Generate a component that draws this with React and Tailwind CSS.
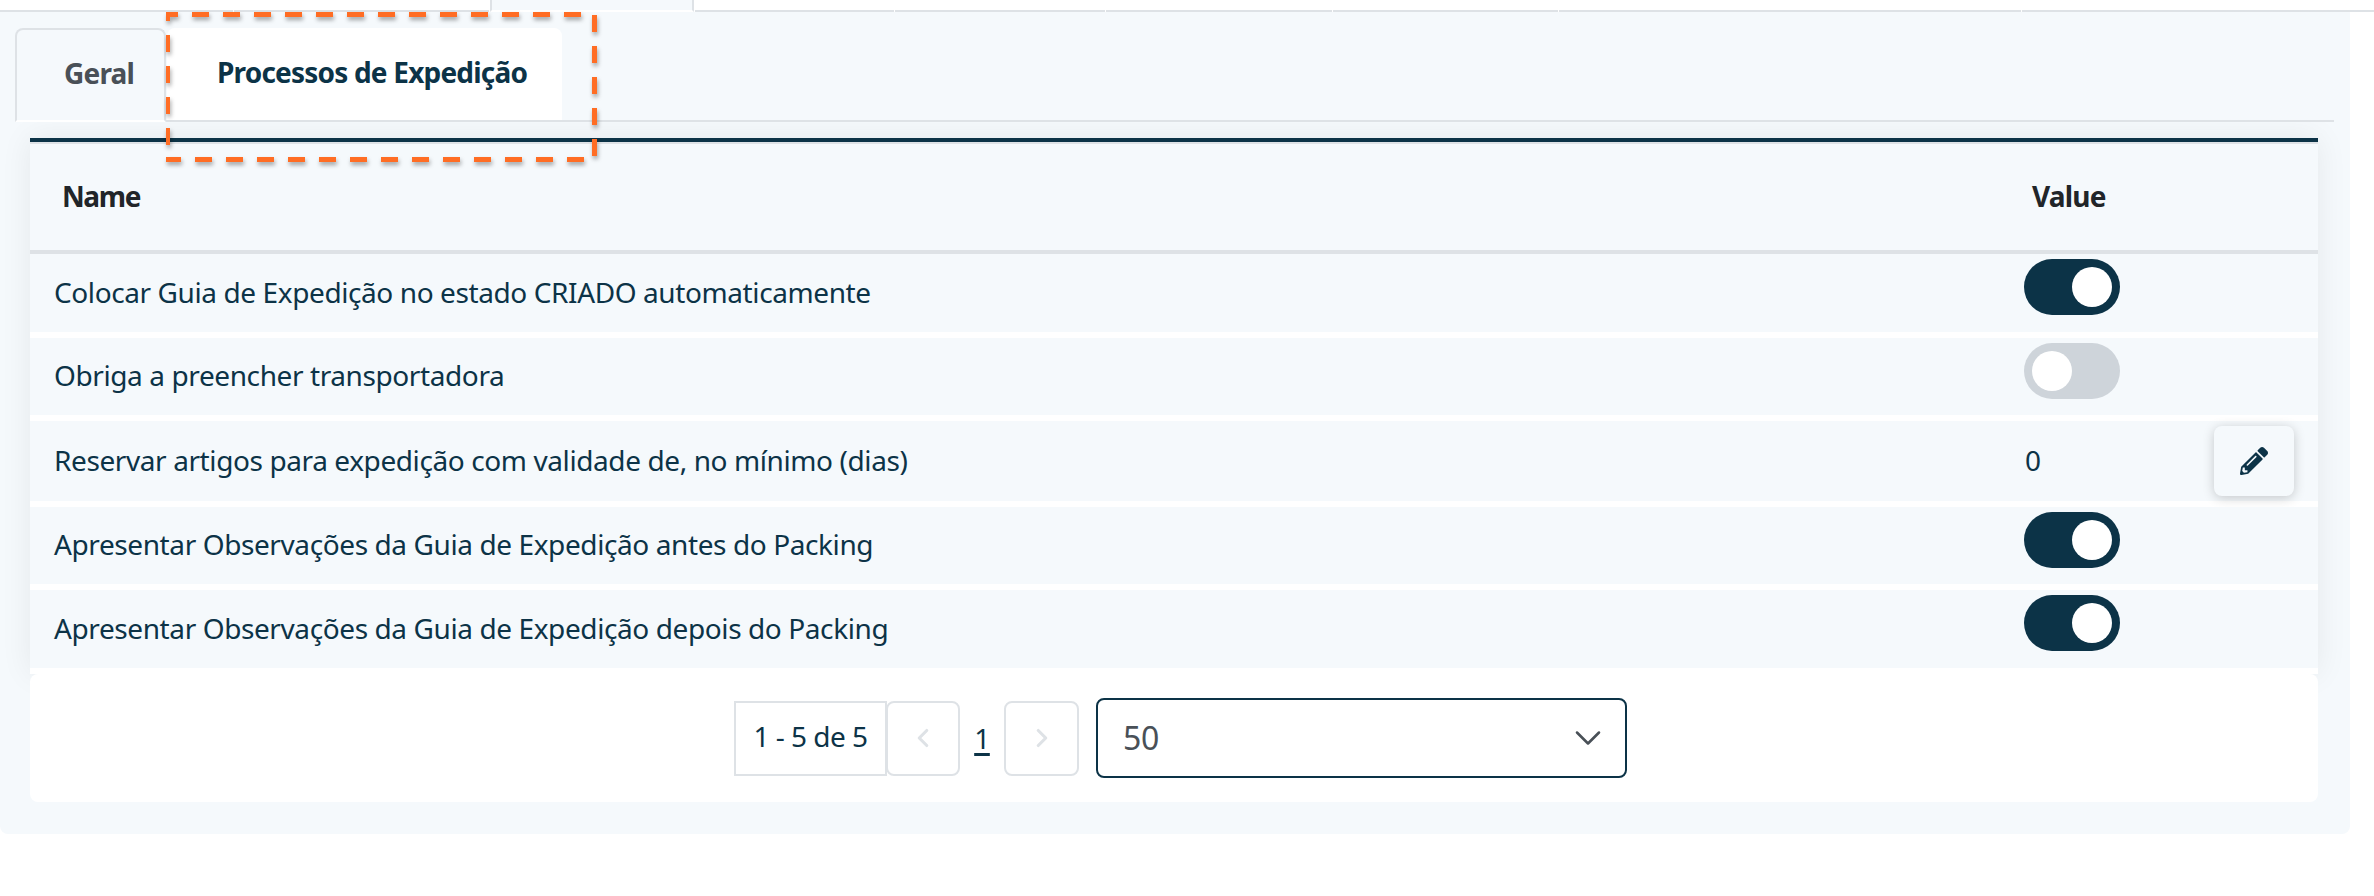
import { ChevronDown, ChevronLeft, ChevronRight } from 'lucide-react';
import { FaPencilAlt } from 'react-icons/fa';

const topTabs = [233, 255, 204, 199, 210, 226, 225, 462, 352];

const rows = [
  { name: 'Colocar Guia de Expedição no estado CRIADO automaticamente', on: true, height: 'h-[78px]' },
  { name: 'Obriga a preencher transportadora', on: false, height: 'h-[77px]' },
  { name: 'Reservar artigos para expedição com validade de, no mínimo (dias)', value: '0', height: 'h-[80px]' },
  { name: 'Apresentar Observações da Guia de Expedição antes do Packing', on: true, height: 'h-[77px]' },
  { name: 'Apresentar Observações da Guia de Expedição depois do Packing', on: true, height: 'h-[78px]' },
];

function Toggle({ on }) {
  return (
    <div className={`mt-[5px] flex h-[56px] w-[96px] items-center rounded-full px-2 ${on ? 'justify-end bg-[#0c3347]' : 'justify-start bg-[#ced4da]'}`}>
      <div className="h-10 w-10 rounded-full bg-white" />
    </div>
  );
}

function Highlight() {
  return (
    <svg className="pointer-events-none absolute left-0 top-0 z-20 drop-shadow-[1px_3px_2px_rgba(0,0,0,0.35)]" width="620" height="180" fill="none" stroke="#ff6d24">
      <line x1="166" y1="14.5" x2="581" y2="14.5" strokeWidth="5" strokeDasharray="17 14" strokeDashoffset="5" />
      <line x1="166" y1="159.5" x2="584" y2="159.5" strokeWidth="5" strokeDasharray="17 14" strokeDashoffset="2" />
      <line x1="168" y1="12" x2="168" y2="145" strokeWidth="4" strokeDasharray="17 14" strokeDashoffset="8" />
      <line x1="594.5" y1="15" x2="594.5" y2="156" strokeWidth="5" strokeDasharray="17 14" />
    </svg>
  );
}

export default function App() {
  return (
    <div className="relative h-[896px] w-[2374px] overflow-hidden bg-white font-['Noto_Sans',sans-serif] text-[28px] tracking-[-0.4px] text-[#0c3347]">
      <div className="flex h-3 gap-px">
        {topTabs.map((width, i) =>
          i === 2 ? (
            <div key={i} style={{ width }} className="border-x-2 border-b-2 border-x-[#dee2e6] border-b-white bg-[#f5f9fc]" />
          ) : (
            <div key={i} style={{ width }} className="border-b-2 border-[#dee2e6]" />
          )
        )}
      </div>

      <div className="h-[822px] w-[2350px] rounded-b-lg bg-[#f5f9fc] px-[15px] pt-4">
        <div className="relative z-10 flex h-[94px] w-[2319px] border-b-2 border-[#dee2e6] bg-[#f5f9fc] font-bold tracking-[-0.8px]">
          <div className="-mb-0.5 flex h-[94px] w-[151px] items-center rounded-t-lg border-x-2 border-t-2 border-x-[#dee2e6] border-t-[#dee2e6] border-b-2 border-b-white pl-[47px] pb-1 text-[#495057]">Geral</div>
          <div className="ml-px flex h-[92px] w-[395px] items-center rounded-t-lg bg-white pl-[50px] pb-1">Processos de Expedição</div>
        </div>

        <div className="mx-[15px] mt-4 w-[2288px]">
          <div className="shadow-[0_0_30px_rgba(0,0,0,0.07)]">
            <div className="border-t-4 border-[#0c3347]">
              <div className="flex h-[112px] items-center border-t-2 border-b-4 border-[#dee2e6] pb-[3px] font-bold tracking-[-0.8px] text-[#212529]">
                <div className="flex-1 pl-8 tracking-[-1.4px]">Name</div>
                <div className="w-[294px] pl-2">Value</div>
              </div>
            </div>
            <div className="flex flex-col gap-[6px] bg-white pb-[6px]">
              {rows.map((row) => (
                <div key={row.name} className={`flex bg-[#f5f9fc] ${row.height}`}>
                  <div className="flex flex-1 items-center pb-[3px] pl-6">{row.name}</div>
                  <div className="w-[294px]">
                    {row.value ? (
                      <div className="flex h-full items-center justify-between pr-6">
                        <span className="pb-[3px] pl-px">{row.value}</span>
                        <button className="flex h-[70px] w-[80px] items-center justify-center rounded-lg bg-[#f5f9fc] shadow-[0_2px_12px_rgba(0,0,0,0.2)]">
                          <FaPencilAlt size={28} />
                        </button>
                      </div>
                    ) : (
                      <Toggle on={row.on} />
                    )}
                  </div>
                </div>
              ))}
            </div>
          </div>

          <div className="relative flex h-[128px] items-center justify-center rounded-lg bg-white pl-[13px]">
            <div className="flex h-[75px] w-[153px] items-center justify-center border-2 border-[#dee2e6] pb-1 tracking-[-0.5px]">1 - 5 de 5</div>
            <div className="-ml-px flex h-[75px] w-[74px] items-center justify-center rounded-lg border-2 border-[#dee2e6] text-[#dee2e6]">
              <ChevronLeft size={30} strokeWidth={2.5} />
            </div>
            <div className="w-[44px] text-center underline decoration-[3px] underline-offset-4">1</div>
            <div className="flex h-[75px] w-[75px] items-center justify-center rounded-lg border-2 border-[#dee2e6] text-[#dee2e6]">
              <ChevronRight size={30} strokeWidth={2.5} />
            </div>
            <div className="ml-[17px] flex h-[80px] w-[531px] items-center justify-between rounded-lg border-2 border-[#0c3347] pl-[25px] pr-[15px] text-[32px] text-[#495057]">
              50
              <ChevronDown size={44} strokeWidth={1.4} />
            </div>
          </div>
        </div>
      </div>

      <Highlight />
    </div>
  );
}
